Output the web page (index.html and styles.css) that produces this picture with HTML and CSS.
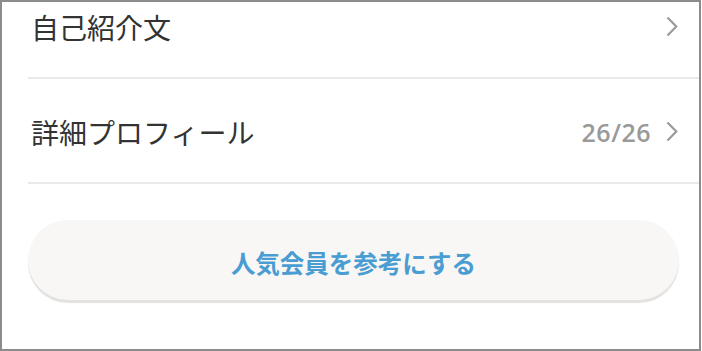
FILE: index.html
```html
<!DOCTYPE html>
<html lang="ja">
<head>
<meta charset="utf-8">
<link rel="stylesheet" href="styles.css">
</head>
<body>
<div class="frame">
  <ul class="list">
    <li class="row">
      <span class="label">自己紹介文</span>
      <span class="meta">
        <svg class="chev" width="12" height="21" viewBox="0 0 12 21"><polyline points="1.5,1.5 10.3,10.5 1.5,19.5" fill="none" stroke="#9a9a9a" stroke-width="2.2"/></svg>
      </span>
    </li>
    <li class="row">
      <span class="label">詳細プロフィール</span>
      <span class="meta">
        <span class="count">26/26</span>
        <svg class="chev" width="12" height="21" viewBox="0 0 12 21"><polyline points="1.5,1.5 10.3,10.5 1.5,19.5" fill="none" stroke="#9a9a9a" stroke-width="2.2"/></svg>
      </span>
    </li>
  </ul>
  <div class="actions">
    <button class="ref-btn">人気会員を参考にする</button>
  </div>
</div>
</body>
</html>
```
FILE: styles.css
```css
html, body {
  margin: 0;
  padding: 0;
  background: #fff;
}
.frame {
  box-sizing: border-box;
  width: 701px;
  height: 351px;
  border: 2px solid #8c8c8c;
  overflow: hidden;
  font-family: "Noto Sans CJK JP", "Noto Sans", sans-serif;
}
.list {
  list-style: none;
  margin: -28px 0 0 26px;
  padding: 0;
}
.row {
  box-sizing: border-box;
  height: 105px;
  border-bottom: 2px solid #e9e9e9;
  display: flex;
  align-items: center;
  justify-content: space-between;
  padding: 2px 21px 0 3px;
}
.label {
  font-size: 28px;
  color: #333;
  font-weight: 400;
}
.meta {
  display: flex;
  align-items: center;
  gap: 15px;
}
.count {
  font-family: "Open Sans", "Liberation Sans", sans-serif;
  font-weight: 600;
  font-size: 25px;
  letter-spacing: 0.5px;
  color: #9a9a9a;
}
.chev {
  display: block;
}
.actions {
  padding: 36px 20px 0 26px;
}
.ref-btn {
  display: block;
  width: 100%;
  height: 80px;
  border: none;
  border-radius: 40px;
  background: #f8f7f6;
  box-shadow: 0 3px 1px #e3e2e1;
  font-family: "Noto Sans CJK JP", sans-serif;
  font-weight: 700;
  font-size: 24.5px;
  color: #4a9dd3;
  padding: 4px 0 0;
  cursor: pointer;
}
```
